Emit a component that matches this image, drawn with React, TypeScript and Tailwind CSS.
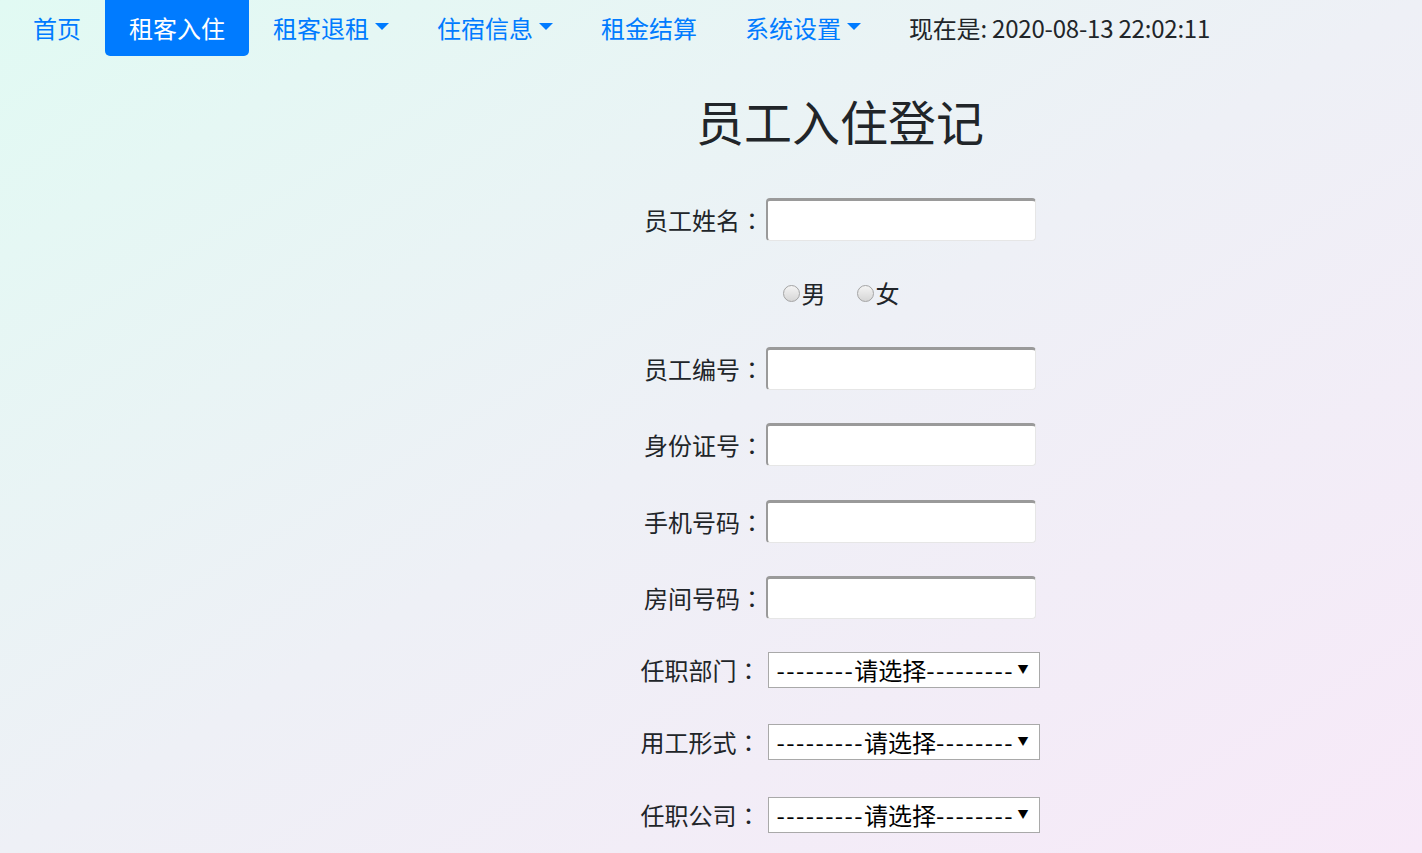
import React from "react";

const FONT = { fontFamily: '"Noto Sans CJK SC", "Noto Sans", sans-serif' };
const COLON = { fontFamily: '"Noto Sans CJK TC", "Noto Sans CJK SC", sans-serif' };

function Caret() {
  return (
    <span className="ml-[6px] inline-block align-middle border-t-[7px] border-x-[7px] border-b-0 border-solid border-t-[#007bff] border-x-transparent relative top-[-2px]" />
  );
}

function NavItem({ label, caret, active }: { label: string; caret?: boolean; active?: boolean }) {
  return (
    <a
      className={
        "px-6 py-3 leading-[32px] text-[24px] whitespace-nowrap flex items-center " +
        (active ? "bg-[#007bff] text-white rounded-b-[5px]" : "text-[#007bff]")
      }
    >
      {label}
      {caret && <Caret />}
    </a>
  );
}

function InputRow({ label, mt }: { label: string; mt: string }) {
  return (
    <div className={"flex items-center " + mt}>
      <label className="w-[120px] text-right text-[24px] leading-[43px] text-[#212529] whitespace-nowrap">
        {label}
        <span style={COLON}>：</span>
      </label>
      <div className="ml-[2px] w-[270px] h-[43px] bg-white rounded-[4px] border-t-[3px] border-l-[2px] border-r border-b border-t-[#9a9a9a] border-l-[#9a9a9a] border-r-[#e6e6e6] border-b-[#e6e6e6]" />
    </div>
  );
}

function SelectRow({ label, pre, post, mt }: { label: string; pre: number; post: number; mt: string }) {
  return (
    <div className={"flex items-center " + mt}>
      <label className="w-[120px] text-right text-[24px] leading-[36px] text-[#212529] whitespace-nowrap">
        {label}
        <span style={COLON}>：</span>
      </label>
      <div className="ml-[7px] w-[272px] h-[36px] bg-white border border-[#a9a9a9] flex items-center justify-between pl-[8px] pr-[10px] text-[24px] text-black">
        <span className="whitespace-nowrap leading-[34px]">
          <span className="tracking-[1.4px]">{"-".repeat(pre)}</span>
          请选择
          <span className="tracking-[1.4px]">{"-".repeat(post)}</span>
        </span>
        <span className="text-[11px] leading-none relative top-[-1px]">▼</span>
      </div>
    </div>
  );
}

function Radio({ label }: { label: string }) {
  return (
    <span className="flex items-center">
      <span className="w-[17px] h-[17px] rounded-full border border-[#a4a4a4] bg-gradient-to-b from-[#f4f4f4] to-[#d6d6d6] mr-[2px]" />
      <span className="text-[24px] text-[#212529] leading-[30px]">{label}</span>
    </span>
  );
}

export default function App() {
  return (
    <div
      className="min-h-screen w-full bg-gradient-to-br from-[#e1faf3] via-[#eef0f6] to-[#f7e9f8] overflow-hidden"
      style={FONT}
    >
      <nav className="flex items-center pl-[9px] h-[56px]">
        <NavItem label="首页" />
        <NavItem label="租客入住" active />
        <NavItem label="租客退租" caret />
        <NavItem label="住宿信息" caret />
        <NavItem label="租金结算" />
        <NavItem label="系统设置" caret />
        <span className="px-6 text-[24px] leading-[32px] text-[#212529] whitespace-nowrap tracking-[-0.2px]">现在是: 2020-08-13 22:02:11</span>
      </nav>

      <div className="pl-[258px] flex flex-col items-center">
        <h1 className="mt-[35px] text-[48px] leading-[58px] text-[#212529]">员工入住登记</h1>
        <InputRow label="员工姓名" mt="mt-[49px]" />
        <div className="mt-[37px] h-[30px] flex items-center gap-[31px] pl-[2px]">
          <Radio label="男" />
          <Radio label="女" />
        </div>
        <InputRow label="员工编号" mt="mt-[39px]" />
        <InputRow label="身份证号" mt="mt-[33px]" />
        <InputRow label="手机号码" mt="mt-[34px]" />
        <InputRow label="房间号码" mt="mt-[33px]" />
        <SelectRow label="任职部门" pre={8} post={9} mt="mt-[33px]" />
        <SelectRow label="用工形式" pre={9} post={8} mt="mt-[36px]" />
        <SelectRow label="任职公司" pre={9} post={8} mt="mt-[37px]" />
      </div>
    </div>
  );
}
